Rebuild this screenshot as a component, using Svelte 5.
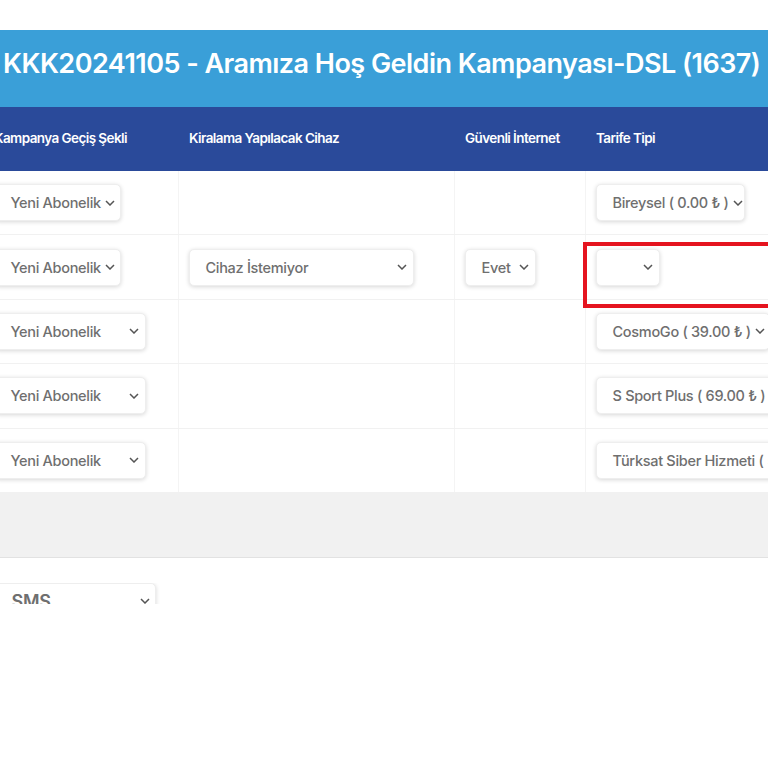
<script>
  const rows = [
    { geçiş: ["Yeni Abonelik", 127], cihaz: null, internet: null, tarife: ["Bireysel ( 0.00 ₺ )", 149] },
    { geçiş: ["Yeni Abonelik", 127], cihaz: ["Cihaz İstemiyor", 225], internet: ["Evet", 71], tarife: ["", 64], marked: true },
    { geçiş: ["Yeni Abonelik", 152], cihaz: null, internet: null, tarife: ["CosmoGo ( 39.00 ₺ )", 174] },
    { geçiş: ["Yeni Abonelik", 152], cihaz: null, internet: null, tarife: ["S Sport Plus ( 69.00 ₺ )", 200] },
    { geçiş: ["Yeni Abonelik", 152], cihaz: null, internet: null, tarife: ["Türksat Siber Hizmeti ( 59.00 ₺ )", 260] }
  ];
</script>

{#snippet picker(item)}
  <div class="select" style="width: {item[1]}px">
    <span class="value">{item[0]}</span>
    <svg class="chevron" width="10" height="6" viewBox="0 0 10 6" aria-hidden="true">
      <path d="M1 1l4 4 4-4" fill="none" stroke="#555" stroke-width="1.5" />
    </svg>
  </div>
{/snippet}

<main>
  <h1>KKK20241105 - Aramıza Hoş Geldin Kampanyası-DSL (1637)</h1>

  <div class="table">
    <div class="row head">
      <div class="cell">Kampanya Geçiş Şekli</div>
      <div class="cell">Kiralama Yapılacak Cihaz</div>
      <div class="cell">Güvenli İnternet</div>
      <div class="cell">Tarife Tipi</div>
    </div>

    {#each rows as row}
      <div class="row">
        <div class="cell">{@render picker(row.geçiş)}</div>
        <div class="cell">
          {#if row.cihaz}{@render picker(row.cihaz)}{/if}
        </div>
        <div class="cell">
          {#if row.internet}{@render picker(row.internet)}{/if}
        </div>
        <div class="cell">
          {@render picker(row.tarife)}
          {#if row.marked}<div class="highlight"></div>{/if}
        </div>
      </div>
    {/each}
  </div>

  <div class="footer"></div>

  <div class="sms-wrap">
    <div class="select sms">
      <span class="value">SMS</span>
      <svg class="chevron" width="10" height="6" viewBox="0 0 10 6" aria-hidden="true">
        <path d="M1 1l4 4 4-4" fill="none" stroke="#555" stroke-width="1.5" />
      </svg>
    </div>
  </div>
</main>

<style>
  :global(body) {
    background: #fff;
    overflow: hidden;
  }

  main {
    width: 768px;
    height: 768px;
    overflow: hidden;
    padding-top: 30px;
    box-sizing: border-box;
    font-family: Inter, Lato, sans-serif;
  }

  h1 {
    margin: 0;
    height: 77px;
    padding: 16px 0 0 3px;
    box-sizing: border-box;
    background: #3a9fd8;
    color: #fff;
    font-size: 27px;
    line-height: 36px;
    font-weight: 600;
    letter-spacing: -0.53px;
    white-space: nowrap;
  }

  .table {
    margin-left: -17px;
    width: 1000px;
  }

  .row {
    display: grid;
    grid-template-columns: 195px 276px 131px 398px;
    height: 64.4px;
    border-bottom: 1px solid #f1f1f1;
    box-sizing: border-box;
  }

  .head {
    height: 64px;
    padding-bottom: 2px;
    background: #2a4a9a;
    color: #fff;
    border-bottom: 0;
    font-size: 13.5px;
    font-weight: 600;
    letter-spacing: -0.58px;
    align-items: center;
  }

  .cell {
    padding: 0 10px;
    display: flex;
    align-items: center;
    height: 100%;
    box-sizing: border-box;
    border-left: 1px solid #f4f4f4;
    position: relative;
  }

  .head .cell {
    padding: 0 11px;
    border-left: 0;
  }

  .select {
    flex: none;
    height: 37px;
    padding: 0 6px 0 15.5px;
    box-sizing: border-box;
    display: flex;
    align-items: center;
    justify-content: space-between;
    gap: 4px;
    background: #fff;
    border: 1px solid #eee;
    border-radius: 5px;
    box-shadow: 0 1px 4px rgba(0, 0, 0, 0.16);
    color: #6f6f6f;
    font-size: 14.5px;
    font-weight: 500;
    letter-spacing: -0.3px;
    white-space: nowrap;
    overflow: hidden;
  }

  .chevron {
    flex: none;
  }

  .highlight {
    position: absolute;
    z-index: 1;
    left: -3px;
    top: 7px;
    width: 400px;
    height: 66px;
    box-sizing: border-box;
    border: 4px solid #e5141f;
  }

  .footer {
    height: 65px;
    background: #f1f1f1;
    border-bottom: 1px solid #e2e2e2;
    box-sizing: border-box;
  }

  .sms-wrap {
    margin-top: 25px;
    height: 21px;
    overflow: hidden;
  }

  .sms {
    width: 161px;
    height: 37px;
    margin-left: -5px;
    font-size: 18px;
    font-weight: 600;
    padding-right: 5px;
  }
</style>
